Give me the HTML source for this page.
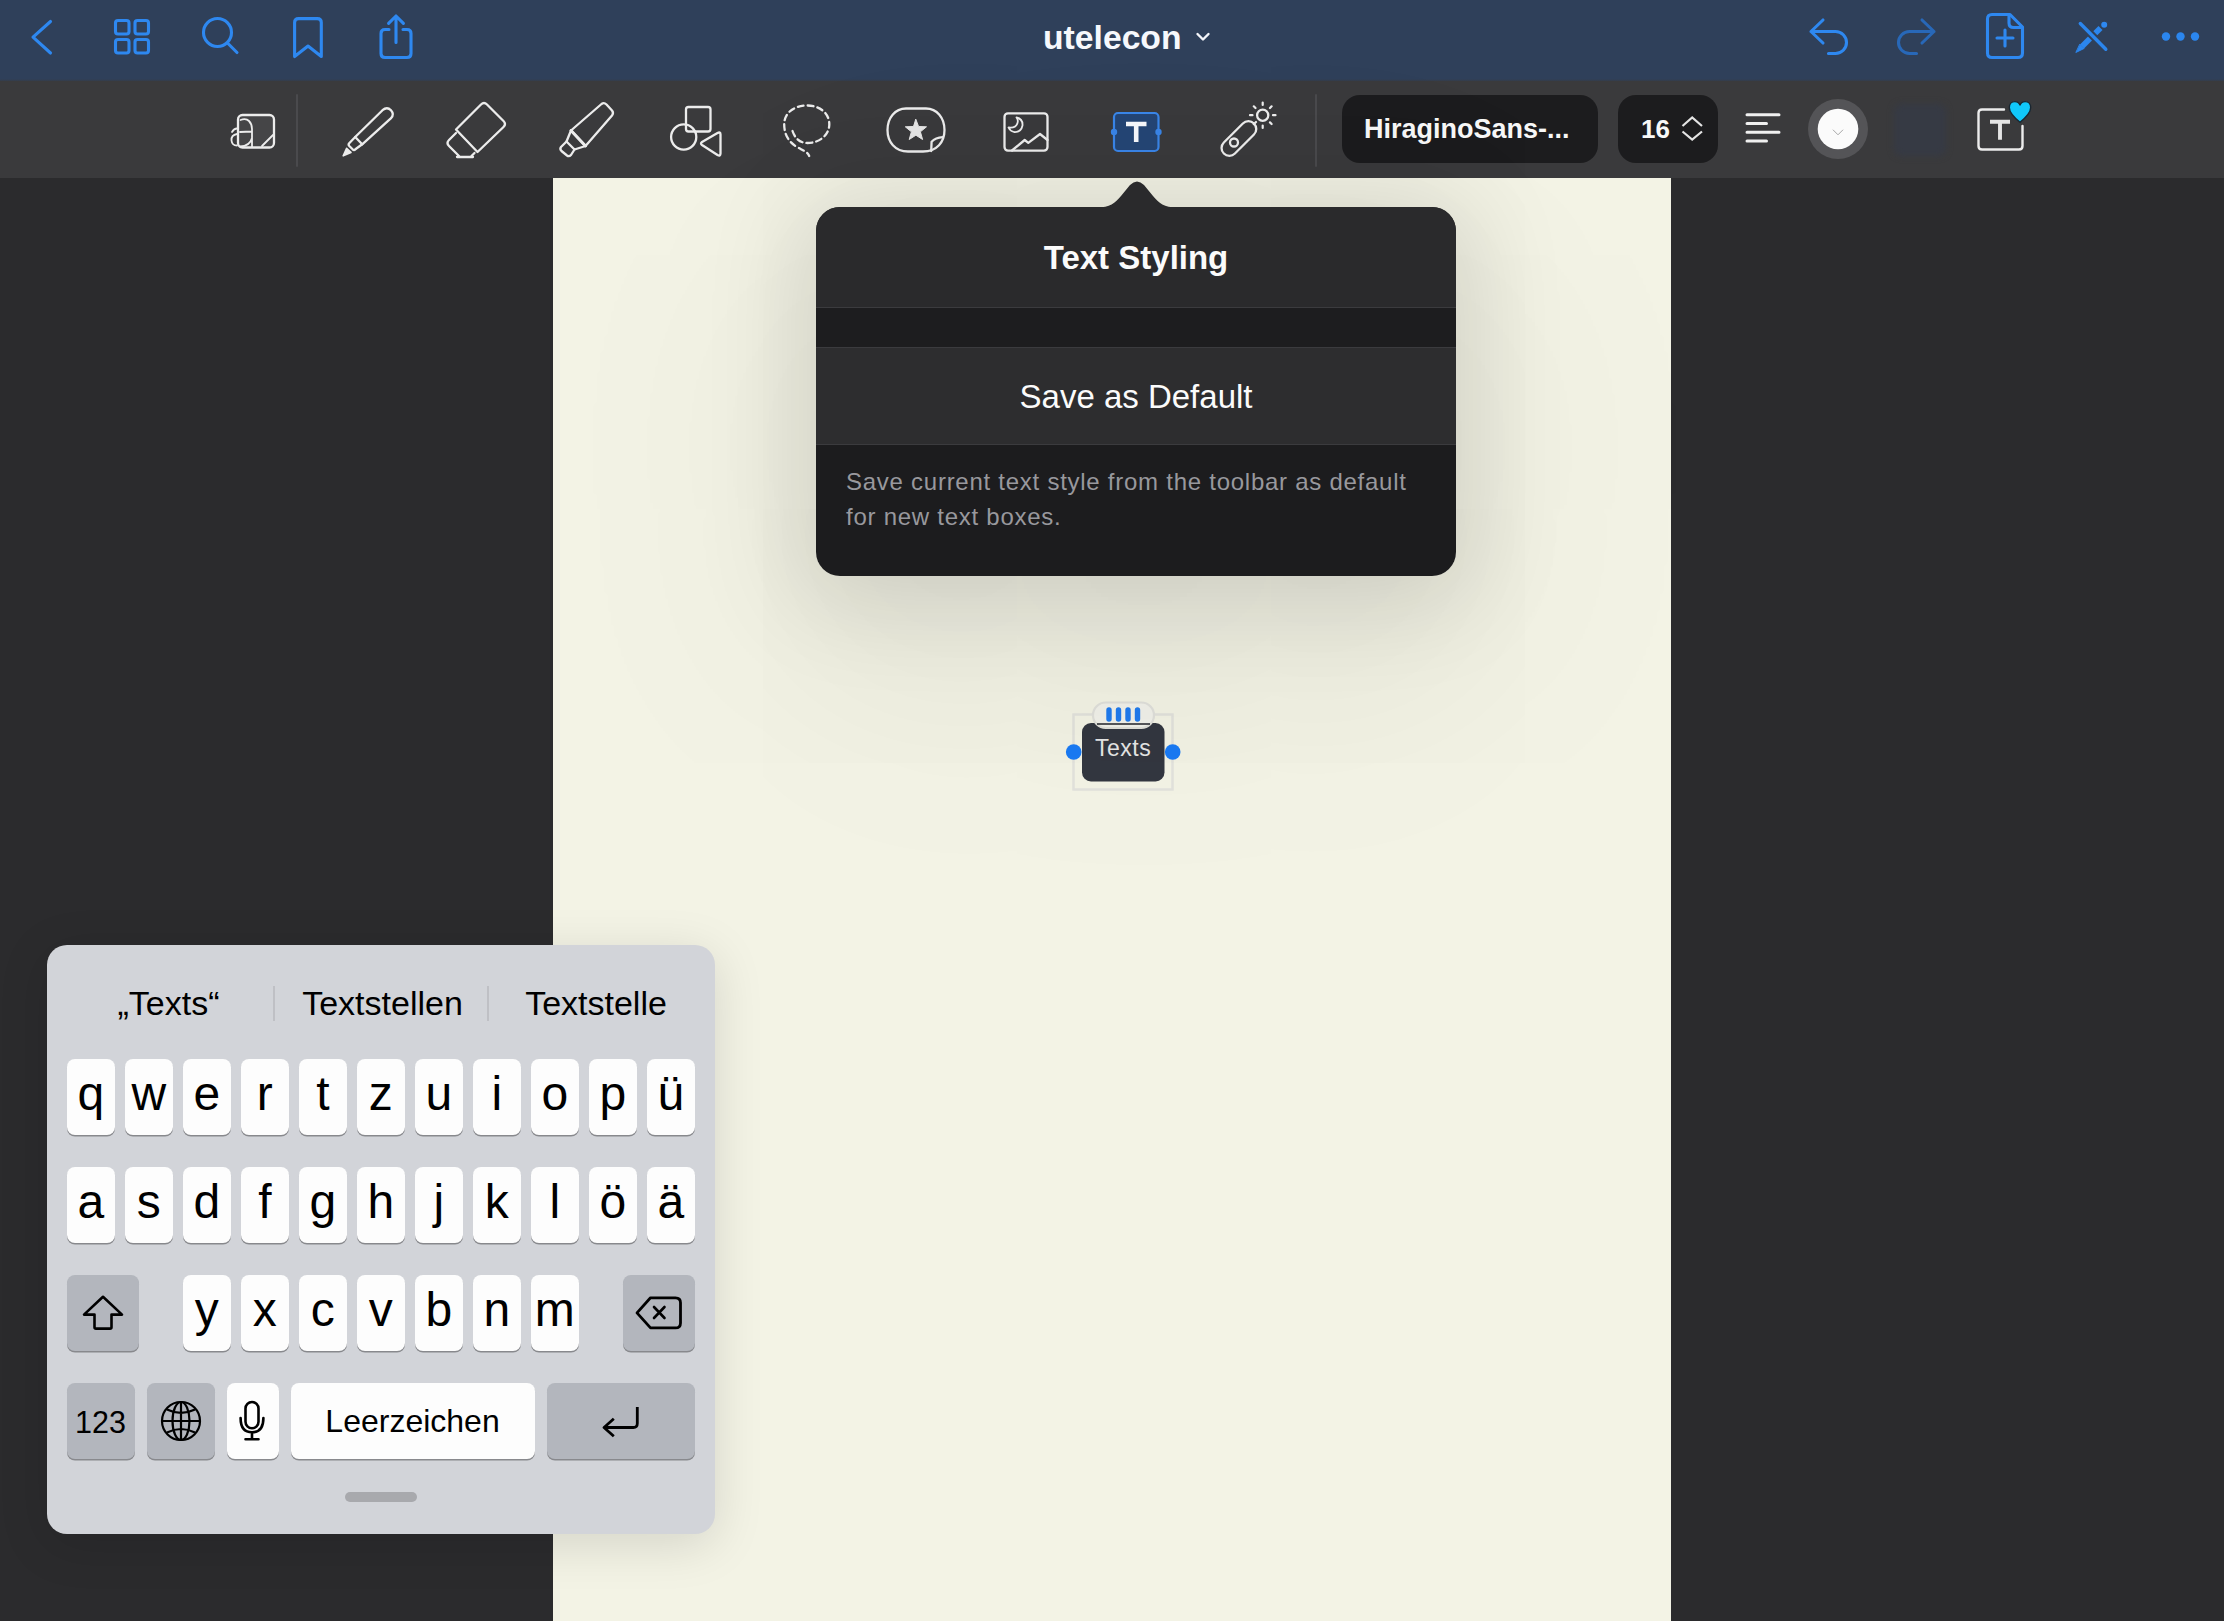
<!DOCTYPE html>
<html><head><meta charset="utf-8">
<style>
*{margin:0;padding:0;box-sizing:border-box}
html,body{width:2224px;height:1621px;overflow:hidden;background:#2b2b2d;font-family:"Liberation Sans",sans-serif}
.a{position:absolute}
svg{position:absolute;overflow:visible}
#topbar{left:0;top:0;width:2224px;height:82px;background:linear-gradient(#2f405a 0,#2f405a 79px,#353c48 81px,#3a3a3c 83px)}
#toolbar{left:0;top:81px;width:2224px;height:97px;background:#3a3a3c}
#paper{left:553px;top:178px;width:1118px;height:1443px;background:#f3f3e5;overflow:hidden}
.t{white-space:nowrap;line-height:1}
#kb{left:47px;top:945px;width:668px;height:589px;background:#d2d4d9;border-radius:20px;box-shadow:0 10px 50px rgba(0,0,0,0.13)}
.key{position:absolute;background:#fdfdfd;border-radius:8px;box-shadow:0 1.5px 0 #88898d;color:#000;text-align:center}
.sp{background:#b3b6bd}
.kl{position:absolute;left:0;top:10.5px;width:100%;text-align:center;font-size:48px;line-height:1}
</style></head><body>
<div id="topbar" class="a"></div>
<div id="toolbar" class="a"></div>
<div id="paper" class="a"></div>
<div class="a" style="left:1342px;top:95px;width:256px;height:68px;background:#1c1c1e;border-radius:18px"></div>
<div class="a" style="left:1618px;top:95px;width:100px;height:68px;background:#1c1c1e;border-radius:18px"></div>
<svg class="a" style="left:0;top:0" width="2224" height="178" viewBox="0 0 2224 178" fill="none" stroke-linecap="round" stroke-linejoin="round">
<g stroke="#4a4a4d" stroke-width="2"><path d="M297 95 L297 166"/><path d="M1316 95 L1316 166"/></g>
<g stroke="#ececec" stroke-width="2.3">
<!-- layout -->
<rect x="238" y="115" width="36" height="32.5" rx="4.5" fill="#454547"/>
<path d="M240.5 120 Q246 118 249 121 Q252 124 252 129 L252 147 M240 132 L252 131.5 M252 138 Q250 146 240 146.5 M232 132 Q234 128.5 237 128.5 M237 134 Q231 135 231.5 140.5 Q232 145.5 237 145.5" stroke-width="1.8"/>
<path d="M262 146 L273 135" stroke-width="1.8"/>
<!-- pen -->
<path d="M355.2 137 L382.5 110.2 Q387 106.2 391 110.2 Q394.8 114.4 390.8 118.4 L362.2 144.3 Z"/>
<path d="M355.2 137 L349.2 143.2 Q348 144.6 349.3 146 L352.6 149.3 Q354 150.6 355.4 149.3 L362.2 144.3"/>
<path d="M343.2 155.8 L346.6 148.3 L351 152.4 Z" fill="#ececec" stroke-width="1.6"/>
<!-- eraser -->
<path d="M456 129.5 L481 104.5 Q484 101.5 487 104.5 L503.5 121 Q506.5 124 503.5 127 L477.5 152 Z"/>
<path d="M456 133 L449 140 Q446 143 449 146 L459.5 156.5 M474.5 153 L470.5 157 M457 157 L473 157" />
<!-- highlighter -->
<path d="M571 130.5 L601.5 104 Q604 102 606.5 104.5 L612 110.5 Q614 113 612 115.5 L585.5 146 Z"/>
<path d="M571 130.5 L585.5 146" stroke-width="3"/>
<path d="M571 130.5 L566.5 141.5 L574.5 149.5 L585.5 146"/>
<path d="M566.5 141.5 L561 147 Q559.5 149 561.5 151 L567 155.5 Q569 157 571 155 L574.5 149.5"/>
<!-- shapes -->
<rect x="686" y="107" width="24.5" height="24.5" rx="2.5"/>
<circle cx="683.7" cy="137" r="12.6"/>
<path d="M702 142 Q700 143.5 702 145 L717.5 155 Q720.5 156.5 720.5 153.5 L720.5 134.5 Q720.5 131.5 717.5 133 Z"/>
<!-- lasso -->
<path d="M792.5 131 C795 138.5 800 143 807.4 143 C819.5 143 829.3 135 829.3 124.2 C829.3 113 819.5 105.5 806.9 105.5 C794 105.5 784.2 113 784.2 124.2 C784.2 134 788 141 796 146.5 C802 150 807.5 151.5 809.2 156" stroke-dasharray="5.8 4" stroke-linecap="round"/>
<!-- sticker -->
<path d="M906 108.5 L926 108.5 C937 108.5 944.5 118 944.5 130 C944.5 142 937 151.5 923 151.5 L908 151.5 C895 151.5 887.5 142 887.5 130 C887.5 118 895 108.5 906 108.5 Z"/>
<path d="M931.2 151 L931.6 141.8 Q935.5 137.8 942.8 137.2" />
<path d="M915.9 119.5 L918.6 126.5 L926.5 126.8 L920.4 131.8 L922.6 139.5 L915.9 135.2 L909.2 139.5 L911.4 131.8 L905.3 126.8 L913.2 126.5 Z" fill="#e6e6e6" stroke="#e6e6e6" stroke-width="1"/>
<!-- image -->
<rect x="1004.5" y="113.3" width="43" height="37.3" rx="3.5"/>
<path d="M1012 150.5 L1024.7 140 L1028.3 142.8 L1040 134 L1047.5 140"/>
<path d="M1016.5 117.5 Q1023 119 1022.5 125.5 Q1021 132.5 1014 132 Q1010 131 1008.5 127.5 Q1016 128.5 1017.5 123 Q1018.5 120 1016.5 117.5 Z" stroke-width="1.8"/>
<!-- laser -->
<rect x="1217.6" y="130.65" width="42.6" height="15.7" rx="7.85" transform="rotate(-45 1238.9 138.5)"/>
<circle cx="1234" cy="142.5" r="4"/>
<circle cx="1262.7" cy="115.2" r="5.6"/>
<path d="M1262.7 102.5 L1262.7 105 M1262.7 125.5 L1262.7 128 M1250 115.2 L1252.5 115.2 M1273 115.2 L1275.5 115.2 M1253.8 106.3 L1255.5 108 M1270 122.4 L1271.6 124 M1271.6 106.3 L1270 108 M1253.8 124.2 L1256 122" stroke-width="2.2"/>
<!-- align -->
<path d="M1747 114.7 L1779 114.7 M1747 123.5 L1766.5 123.5 M1747 132.3 L1779 132.3 M1747 141 L1766.5 141" stroke-width="3" stroke="#f0f0f0"/>
<!-- stepper -->
<path d="M1682.5 126 L1692.2 117.5 L1702 126 M1682.5 131.5 L1692.2 139.5 L1702 131.5" stroke="#e4e4e4" stroke-width="2.2" stroke-linecap="butt" stroke-linejoin="miter"/>
<!-- T w heart -->
<path d="M2004 109.5 L1982 109.5 Q1978.5 109.5 1978.5 113 L1978.5 146 Q1978.5 149.5 1982 149.5 L2019 149.5 Q2022.5 149.5 2022.5 146 L2022.5 126" stroke-width="2.4"/>
</g>
<path d="M1990 121.8 L2010 121.8 M2000 121.8 L2000 139.7" stroke="#e4e4e4" stroke-width="3.9" stroke-linecap="butt"/>
<path d="M2020 122.3 C2014 117.5 2009.3 113 2009.3 107.6 C2009.3 104 2011.8 101.6 2014.9 101.6 C2017.4 101.6 2019.2 103 2020 105 C2020.8 103 2022.6 101.6 2025.1 101.6 C2028.2 101.6 2030.7 104 2030.7 107.6 C2030.7 113 2026 117.5 2020 122.3 Z" fill="#10c8fa" stroke="#1a2630" stroke-width="1.4"/>
<!-- selected text tool -->
<rect x="1114" y="113" width="44.5" height="38" rx="4" fill="#254675" stroke="#3a86e8" stroke-width="2.2"/>
<circle cx="1114" cy="132" r="3.2" fill="#3a86e8"/><circle cx="1158.5" cy="132" r="3.2" fill="#3a86e8"/>
<path d="M1126 124 L1146.5 124 M1136.2 124 L1136.2 142" stroke="#f6f8fc" stroke-width="4.6" stroke-linecap="butt"/>
<!-- color circle -->
<circle cx="1838" cy="129" r="30" fill="#545457"/>
<circle cx="1838" cy="129" r="20.3" fill="#fbfbfb"/>
<path d="M1833.2 130 L1838 134.8 L1842.8 130" stroke="#a8a8a8" stroke-width="1" fill="none"/>
<rect x="1894" y="104" width="52" height="52" rx="8" fill="#363a44" style="filter:blur(3px)"/>
</svg>
<div class="a t" style="left:1364px;top:115.5px;font-size:27px;font-weight:bold;color:#f8f8f8">HiraginoSans-...</div>
<div class="a t" style="left:1641px;top:116px;font-size:26px;font-weight:bold;color:#f8f8f8">16</div>

<svg class="a" style="left:0;top:0" width="2224" height="178" viewBox="0 0 2224 178" fill="none" stroke-linecap="round" stroke-linejoin="round">
<g stroke="#2e88f0" stroke-width="3.1">
<path d="M50.5 21.5 L33 37.2 L50.5 53"/>
<rect x="115.5" y="20.5" width="13.5" height="13.5" rx="2.5"/>
<rect x="135" y="20.5" width="13.5" height="13.5" rx="2.5"/>
<rect x="115.5" y="39.5" width="13.5" height="13.5" rx="2.5"/>
<rect x="135" y="39.5" width="13.5" height="13.5" rx="2.5"/>
<circle cx="217.5" cy="32.5" r="14"/>
<path d="M228 43.5 L237 52.5"/>
<path d="M294.6 22.6 Q294.6 18.6 298.6 18.6 L317.3 18.6 Q321.3 18.6 321.3 22.6 L321.3 56.5 L308 46 L294.6 56.5 Z"/>
<path d="M389 29.5 L385 29.5 Q381 29.5 381 33.5 L381 53.5 Q381 57.5 385 57.5 L407 57.5 Q411 57.5 411 53.5 L411 33.5 Q411 29.5 407 29.5 L403 29.5"/>
<path d="M396 42.5 L396 16.5 M388.6 23.4 L396 16 L403.4 23.4"/>
<path d="M1823 20 L1811 31.5 L1823 43 M1811 31.5 L1835.5 31.5 A11 11 0 0 1 1835.5 53.5 L1828.5 53.5"/>
<path d="M1992 14.5 L2010 14.5 L2022.5 27 L2022.5 53 Q2022.5 57.5 2018 57.5 L1992 57.5 Q1987.5 57.5 1987.5 53 L1987.5 19 Q1987.5 14.5 1992 14.5 Z"/>
<path d="M2009 15 L2009 23 Q2009 27.5 2013.5 27.5 L2022 27.5"/>
<path d="M2005 30 L2005 46 M1997 38 L2013 38"/>
</g>
<path d="M1933 20 L1945 31.5 L1933 43 M1945 31.5 L1920.5 31.5 A11 11 0 0 0 1920.5 53.5 L1927.5 53.5" stroke="#2868b8" stroke-width="3.1" fill="none" transform="translate(-11 0)"/>
<path d="M2082 46.5 L2100.5 28" stroke="#2b86ee" stroke-width="5.6" stroke-linecap="butt"/>
<path d="M2080 44.5 L2084 48.5 L2076.2 52.3 Z" fill="#2b86ee" stroke="#2b86ee" stroke-width="1" stroke-linejoin="round"/>
<circle cx="2104.2" cy="24.8" r="3.7" fill="#2e88f0" stroke="#2f405a" stroke-width="1.4"/>
<path d="M2080.3 23.5 L2105.8 49.2" stroke="#2f405a" stroke-width="7.5" stroke-linecap="round"/>
<path d="M2080.3 23.5 L2105.8 49.2" stroke="#2b86ee" stroke-width="3.4" stroke-linecap="round"/>
<g fill="#2b86ee"><circle cx="2166" cy="36.5" r="4.2"/><circle cx="2180.5" cy="36.5" r="4.2"/><circle cx="2195" cy="36.5" r="4.2"/></g>
<path d="M1197.5 34 L1203 39.5 L1208.5 34" stroke="#f4f6fa" stroke-width="2.4"/>
</svg>
<div class="a t" style="left:1043px;top:21px;font-size:33.7px;font-weight:bold;color:#f6f8fc;letter-spacing:0px">utelecon</div>

<svg class="a" style="left:1060px;top:695px" width="130" height="105" viewBox="1060 695 130 105">
<rect x="1073.5" y="714.5" width="99" height="75" fill="none" stroke="#e2e2dc" stroke-width="2.5"/>
<rect x="1082" y="723" width="82.5" height="58.5" rx="9" fill="#333740"/>
<rect x="1093" y="702.5" width="61" height="25.5" rx="12.7" fill="#f1f1ea" stroke="#e0e0da" stroke-width="2.2"/>
<path d="M1097 724 L1150 724" stroke="#20232a" stroke-width="1.6"/>
<g stroke="#1f7bef" stroke-width="5.4" stroke-linecap="round"><path d="M1109 710 L1109 719 M1118.5 710 L1118.5 719 M1128 710 L1128 719 M1137.5 710 L1137.5 719"/></g>
<circle cx="1073.7" cy="752" r="7.8" fill="#1a7bf5"/><circle cx="1172.7" cy="752" r="7.8" fill="#1a7bf5"/>
</svg>
<div class="a t" style="left:1095px;top:737px;font-size:23px;letter-spacing:0.5px;color:#e6e6e6">Texts</div>
<div class="a" style="left:816px;top:207px;width:640px;height:369px;border-radius:24px;box-shadow:0 12px 100px 15px rgba(0,0,0,0.12), 0 80px 260px 40px rgba(0,0,0,0.065)"></div>
<svg class="a" style="left:1095px;top:178px" width="80" height="32" viewBox="1095 178 80 32"><path d="M1097 207.5 C1110 207.5 1115 203 1121 196 L1130 185 Q1137 178 1144 185 L1153 196 C1159 203 1164 207.5 1177 207.5 Z" fill="#2a2a2c"/></svg>
<div class="a" style="left:816px;top:207px;width:640px;height:369px;border-radius:24px;overflow:hidden;background:#1c1c1e">
 <div class="a" style="left:0;top:0;width:640px;height:100px;background:#2a2a2c"></div>
 <div class="a" style="left:0;top:100px;width:640px;height:1px;background:#3b3b3e"></div>
 <div class="a" style="left:0;top:101px;width:640px;height:39px;background:#1d1d1f"></div>
 <div class="a" style="left:0;top:140px;width:640px;height:1px;background:#3b3b3e"></div>
 <div class="a" style="left:0;top:141px;width:640px;height:96px;background:#2d2d2f"></div>
 <div class="a" style="left:0;top:237px;width:640px;height:1px;background:#3b3b3e"></div>
 <div class="a t" style="left:0;top:34px;width:640px;text-align:center;font-size:33px;font-weight:bold;color:#fbfbfb">Text Styling</div>
 <div class="a t" style="left:0;top:173px;width:640px;text-align:center;font-size:33px;color:#fbfbfb">Save as Default</div>
 <div class="a" style="left:30px;top:257px;width:600px;font-size:24px;line-height:35px;color:#98989d;letter-spacing:0.74px">Save current text style from the toolbar as default<br>for new text boxes.</div>
</div>
<div id="kb" class="a">
<div class="a t" style="left:23px;top:40.5px;width:197px;text-align:center;font-size:34px;color:#000">„Texts“</div>
<div class="a t" style="left:237px;top:40.5px;width:197px;text-align:center;font-size:34px;color:#000">Textstellen</div>
<div class="a t" style="left:450.5px;top:40.5px;width:197px;text-align:center;font-size:34px;color:#000">Textstelle</div>
<div class="a" style="left:226px;top:41px;width:2px;height:35px;background:#bfc0c5"></div>
<div class="a" style="left:440px;top:41px;width:2px;height:35px;background:#bfc0c5"></div>
<div class="key" style="left:20px;top:114px;width:47.6px;height:76px;"><span class="kl">q</span></div>
<div class="key" style="left:78px;top:114px;width:47.6px;height:76px;"><span class="kl">w</span></div>
<div class="key" style="left:136px;top:114px;width:47.6px;height:76px;"><span class="kl">e</span></div>
<div class="key" style="left:194px;top:114px;width:47.6px;height:76px;"><span class="kl">r</span></div>
<div class="key" style="left:252px;top:114px;width:47.6px;height:76px;"><span class="kl">t</span></div>
<div class="key" style="left:310px;top:114px;width:47.6px;height:76px;"><span class="kl">z</span></div>
<div class="key" style="left:368px;top:114px;width:47.6px;height:76px;"><span class="kl">u</span></div>
<div class="key" style="left:426px;top:114px;width:47.6px;height:76px;"><span class="kl">i</span></div>
<div class="key" style="left:484px;top:114px;width:47.6px;height:76px;"><span class="kl">o</span></div>
<div class="key" style="left:542px;top:114px;width:47.6px;height:76px;"><span class="kl">p</span></div>
<div class="key" style="left:600px;top:114px;width:47.6px;height:76px;"><span class="kl">ü</span></div>
<div class="key" style="left:20px;top:222px;width:47.6px;height:76px;"><span class="kl">a</span></div>
<div class="key" style="left:78px;top:222px;width:47.6px;height:76px;"><span class="kl">s</span></div>
<div class="key" style="left:136px;top:222px;width:47.6px;height:76px;"><span class="kl">d</span></div>
<div class="key" style="left:194px;top:222px;width:47.6px;height:76px;"><span class="kl">f</span></div>
<div class="key" style="left:252px;top:222px;width:47.6px;height:76px;"><span class="kl">g</span></div>
<div class="key" style="left:310px;top:222px;width:47.6px;height:76px;"><span class="kl">h</span></div>
<div class="key" style="left:368px;top:222px;width:47.6px;height:76px;"><span class="kl">j</span></div>
<div class="key" style="left:426px;top:222px;width:47.6px;height:76px;"><span class="kl">k</span></div>
<div class="key" style="left:484px;top:222px;width:47.6px;height:76px;"><span class="kl">l</span></div>
<div class="key" style="left:542px;top:222px;width:47.6px;height:76px;"><span class="kl">ö</span></div>
<div class="key" style="left:600px;top:222px;width:47.6px;height:76px;"><span class="kl">ä</span></div>
<div class="key sp" style="left:20px;top:330px;width:71.5px;height:76px;"><svg width="72" height="76" viewBox="0 0 72 76" style="left:0;top:0"><path d="M36 21.8 L55 39.6 L44.5 39.6 L44.5 52.2 Q44.5 53.6 43 53.6 L29 53.6 Q27.5 53.6 27.5 52.2 L27.5 39.6 L17 39.6 Z" fill="none" stroke="#000" stroke-width="2.6" stroke-linejoin="round"/></svg></div>
<div class="key" style="left:136px;top:330px;width:47.6px;height:76px;"><span class="kl">y</span></div>
<div class="key" style="left:194px;top:330px;width:47.6px;height:76px;"><span class="kl">x</span></div>
<div class="key" style="left:252px;top:330px;width:47.6px;height:76px;"><span class="kl">c</span></div>
<div class="key" style="left:310px;top:330px;width:47.6px;height:76px;"><span class="kl">v</span></div>
<div class="key" style="left:368px;top:330px;width:47.6px;height:76px;"><span class="kl">b</span></div>
<div class="key" style="left:426px;top:330px;width:47.6px;height:76px;"><span class="kl">n</span></div>
<div class="key" style="left:484px;top:330px;width:47.6px;height:76px;"><span class="kl">m</span></div>
<div class="key sp" style="left:576px;top:330px;width:71.5px;height:76px;"><svg width="72" height="76" viewBox="0 0 72 76" style="left:0;top:0"><path d="M27.5 22.8 L52.5 22.8 Q57.5 22.8 57.5 27.8 L57.5 47.9 Q57.5 52.9 52.5 52.9 L27.5 52.9 L14 37.85 Z" fill="none" stroke="#000" stroke-width="2.8" stroke-linejoin="round"/><path d="M31 32 L41.5 43 M41.5 32 L31 43" stroke="#000" stroke-width="2.6" stroke-linecap="round"/></svg></div>
<div class="key sp" style="left:20px;top:438px;width:67.5px;height:76px;"><span class="t a" style="left:0;top:23.5px;width:67px;text-align:center;font-size:30.5px">123</span></div>
<div class="key sp" style="left:100px;top:438px;width:67.5px;height:76px;"><svg width="68" height="76" viewBox="0 0 68 76" style="left:0;top:0"><g fill="none" stroke="#000" stroke-width="2.2"><circle cx="34" cy="38" r="19"/><ellipse cx="34" cy="38" rx="8.5" ry="19"/><path d="M34 19 L34 57 M15 38 L53 38 M20 26.4 Q34 33.2 48 26.4 M20 49.5 Q34 42.5 48 49.5"/></g></svg></div>
<div class="key" style="left:180px;top:438px;width:51.5px;height:76px;"><svg width="52" height="76" viewBox="0 0 52 76" style="left:0;top:0"><g fill="none" stroke="#000" stroke-width="2.6" stroke-linecap="round"><rect x="18.5" y="19" width="13" height="26.3" rx="6.5"/><path d="M13.6 35 Q13.6 49.3 25 49.3 Q36.4 49.3 36.4 35 M25 49.3 L25 56 M18.5 56.2 L31.5 56.2"/></g></svg></div>
<div class="key" style="left:244px;top:438px;width:243.5px;height:76px;"><span class="t a" style="left:0;top:21.5px;width:243px;text-align:center;font-size:32px">Leerzeichen</span></div>
<div class="key sp" style="left:500px;top:438px;width:147.5px;height:76px;"><svg width="148" height="76" viewBox="0 0 148 76" style="left:0;top:0"><g fill="none" stroke="#000" stroke-width="2.8" stroke-linecap="round" stroke-linejoin="round"><path d="M90.3 24 L90.3 40.5 Q90.3 44.5 86.3 44.5 L57 44.5 M66.8 35.8 L57 44.5 L66.8 53.2" stroke-linecap="butt"/></g></svg></div>
<div class="a" style="left:298px;top:547px;width:72px;height:10px;border-radius:5px;background:#a8a9ad"></div>
</div>
</body></html>
